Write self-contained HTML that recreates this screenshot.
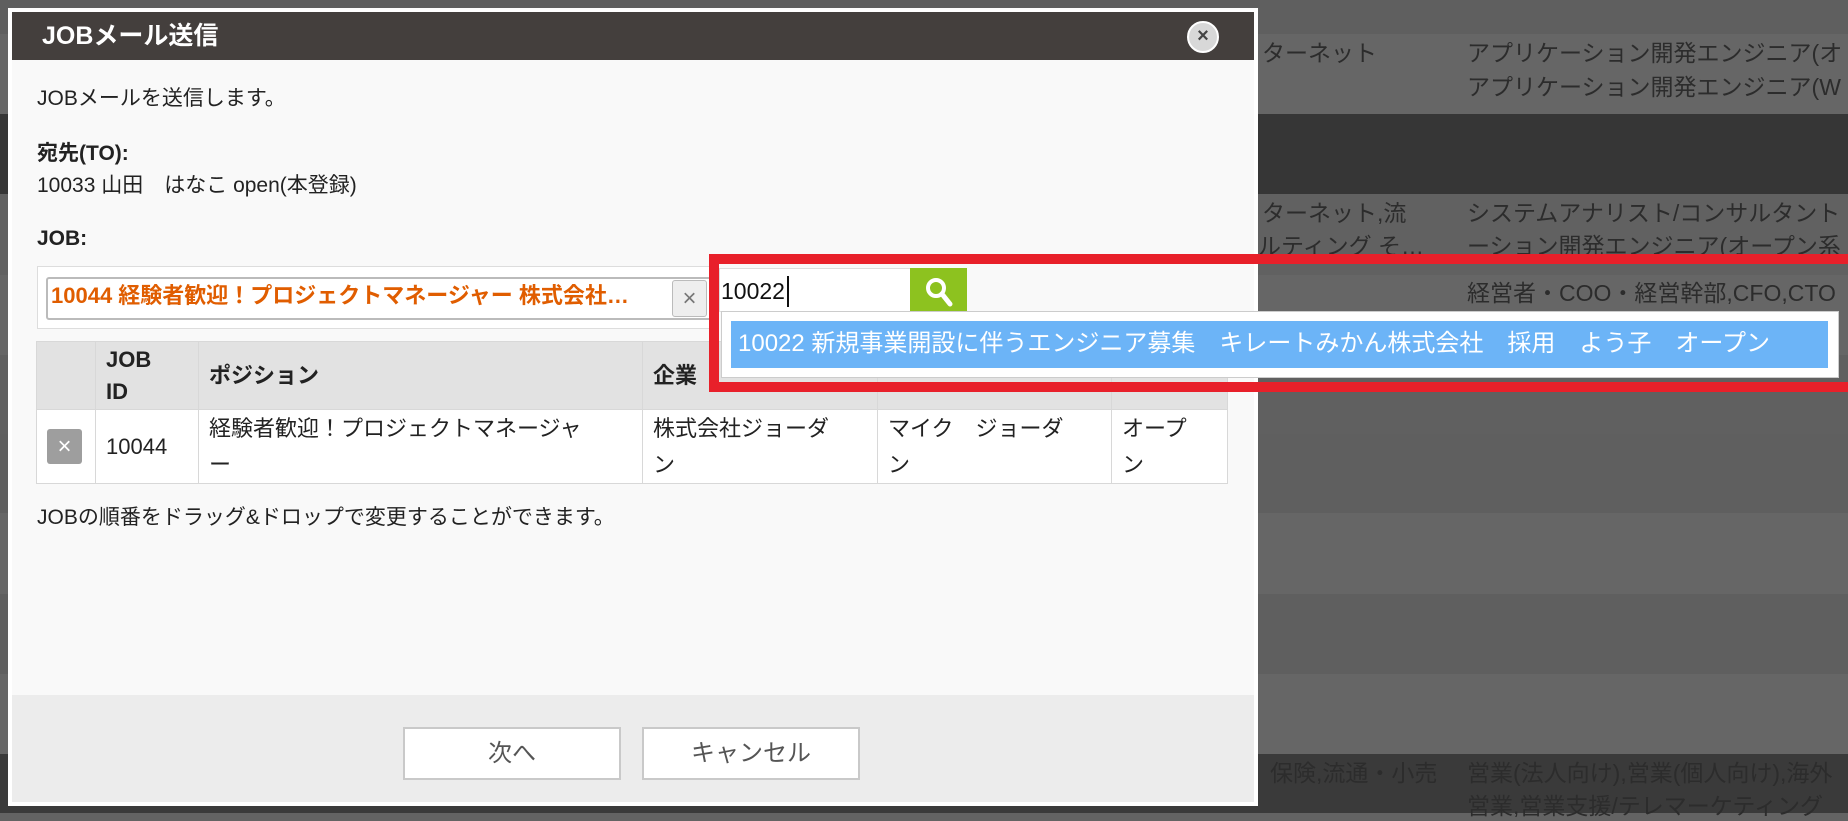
<!DOCTYPE html>
<html><head><meta charset="utf-8">
<style>
*{margin:0;padding:0;box-sizing:border-box}
body{width:1848px;height:813px;overflow:hidden;background:#636363;font-family:"Liberation Sans","Noto Sans CJK JP",sans-serif;position:relative}
.a{position:absolute}
.band{position:absolute;left:0;width:1848px}
.bt{position:absolute;color:#2c2c2c;font-size:23px;white-space:nowrap;line-height:30px}
.t{position:absolute;white-space:nowrap;color:#222;font-size:21px;line-height:26px}
td{border:1px solid #d8d8d8;font-size:22px;color:#222;vertical-align:middle;padding:0 10px;line-height:36px;overflow:hidden}
</style></head><body>
<div class="band" style="top:0;height:34px;background:#5f5f5f"></div>
<div class="band" style="top:34px;height:80px;background:#666"></div>
<div class="band" style="top:114px;height:80px;background:#363636"></div>
<div class="band" style="top:194px;height:81px;background:#616161"></div>
<div class="band" style="top:275px;height:80px;background:#666"></div>
<div class="band" style="top:355px;height:79px;background:#606060"></div>
<div class="band" style="top:434px;height:79px;background:#5f5f5f"></div>
<div class="band" style="top:513px;height:81px;background:#666"></div>
<div class="band" style="top:594px;height:80px;background:#5f5f5f"></div>
<div class="band" style="top:674px;height:80px;background:#666"></div>
<div class="band" style="top:754px;height:59px;background:#3a3a3a"></div>
<div class="bt" style="left:1262px;top:38px">ターネット</div>
<div class="bt" style="left:1467px;top:38px">アプリケーション開発エンジニア(オ</div>
<div class="bt" style="left:1467px;top:72px">アプリケーション開発エンジニア(W</div>
<div class="bt" style="left:1262px;top:198px">ターネット,流</div>
<div class="bt" style="left:1467px;top:198px">システムアナリスト/コンサルタント</div>
<div class="bt" style="left:1258px;top:231px">ルティング そ…</div>
<div class="bt" style="left:1467px;top:231px">ーション開発エンジニア(オープン系</div>
<div class="bt" style="left:1467px;top:278px">経営者・COO・経営幹部,CFO,CTO</div>
<div class="bt" style="left:1270px;top:758px">保険,流通・小売</div>
<div class="bt" style="left:1467px;top:758px">営業(法人向け),営業(個人向け),海外</div>
<div class="bt" style="left:1467px;top:791px">営業,営業支援/テレマーケティング</div>

<div class="a" style="left:8px;top:8px;width:1250px;height:798px;background:#fff"></div>
<div class="a" style="left:12px;top:12px;width:1242px;height:790px;background:#f9f9f9"></div>
<div class="a" style="left:12px;top:12px;width:1242px;height:48px;background:#443f3d"></div>
<div class="t" style="left:42px;top:21px;color:#fff;font-size:25px;line-height:30px;font-weight:bold">JOBメール送信</div>
<div class="a" style="left:1187px;top:21px;width:32px;height:32px;border-radius:50%;background:#d8d8d8;border:2px solid #fff;color:#444;font-size:20px;font-weight:bold;text-align:center;line-height:26px">×</div>
<div class="t" style="left:37px;top:86px">JOBメールを送信します。</div>
<div class="t" style="left:37px;top:141px;font-weight:bold">宛先(TO):</div>
<div class="t" style="left:37px;top:173px">10033 山田　はなこ open(本登録)</div>
<div class="t" style="left:37px;top:226px;font-weight:bold">JOB:</div>

<div class="a" style="left:37px;top:266px;width:680px;height:63px;border:1px solid #ddd;background:#fff"></div>
<div class="a" style="left:46px;top:277px;width:670px;height:43px;border:2px solid #bbb;border-radius:3px;background:#fff"></div>
<div class="t" style="left:51px;top:283px;color:#e05d00;font-weight:bold;font-size:22px">10044 経験者歓迎！プロジェクトマネージャー 株式会社…</div>
<div class="a" style="left:672px;top:280px;width:35px;height:37px;border:1px solid #bbb;border-radius:3px;background:#eee;color:#777;font-size:24px;text-align:center;line-height:35px">×</div>

<table class="a" style="left:36px;top:341px;width:1192px;border-collapse:collapse;background:#fff;table-layout:fixed">
<tr style="background:#e2e2e2;height:68px"><td style="width:59px;line-height:32px"></td><td style="width:103px;font-weight:bold;line-height:32px">JOB<br>ID</td><td style="width:444px;font-weight:bold">ポジション</td><td style="width:235px;font-weight:bold">企業</td><td style="width:234px"></td><td></td></tr>
<tr style="height:74px"><td><div style="width:35px;height:35px;background:#9e9e9e;border-radius:3px;color:#fff;font-size:24px;text-align:center;line-height:35px">×</div></td><td>10044</td><td>経験者歓迎！プロジェクトマネージャ<br>ー</td><td>株式会社ジョーダ<br>ン</td><td>マイク　ジョーダ<br>ン</td><td>オープ<br>ン</td></tr>
</table>
<div class="t" style="left:37px;top:505px">JOBの順番をドラッグ&amp;ドロップで変更することができます。</div>

<div class="a" style="left:12px;top:695px;width:1242px;height:107px;background:#ececec"></div>
<div class="a" style="left:403px;top:727px;width:218px;height:53px;border:2px solid #c9c9c9;background:#fff;text-align:center;line-height:49px;font-size:24px;color:#555">次へ</div>
<div class="a" style="left:642px;top:727px;width:218px;height:53px;border:2px solid #c9c9c9;background:#fff;text-align:center;line-height:49px;font-size:24px;color:#555">キャンセル</div>

<div class="a" style="left:709px;top:254px;width:1139px;height:138px;border:10px solid #e8202a;border-right:none"></div>
<div class="a" style="left:719px;top:268px;width:192px;height:44px;background:#fff;border:1px solid #ddd"></div>
<div class="t" style="left:721px;top:276px;font-size:23px;line-height:30px;color:#111">10022</div>
<div class="a" style="left:787px;top:276px;width:2px;height:31px;background:#111"></div>
<div class="a" style="left:910px;top:268px;width:57px;height:44px;background:#8dc21f"></div>
<svg class="a" style="left:922px;top:274px" width="34" height="36" viewBox="0 0 34 36"><circle cx="14" cy="14" r="8" fill="none" stroke="#fff" stroke-width="4"/><line x1="20" y1="20" x2="28" y2="30" stroke="#fff" stroke-width="5" stroke-linecap="round"/></svg>
<div class="a" style="left:721px;top:311px;width:1118px;height:67px;background:#fff;border:1px solid #ccc"></div>
<div class="a" style="left:731px;top:321px;width:1097px;height:47px;background:#6cb4f7"></div>
<div class="t" style="left:738px;top:329px;color:#fff;font-size:24px;line-height:30px">10022 新規事業開設に伴うエンジニア募集　キレートみかん株式会社　採用　よう子　オープン</div>
</body></html>
